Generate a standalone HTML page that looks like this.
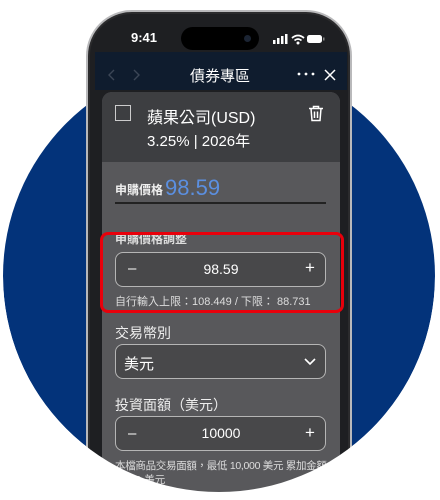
<!DOCTYPE html>
<html style="width:440px;height:500px;overflow:hidden"><head><meta charset="utf-8"><style>
*{margin:0;padding:0;box-sizing:border-box}
body{width:440px;height:500px;background:#fff;position:relative;overflow:hidden;font-family:"Liberation Sans","Noto Sans CJK TC",sans-serif;color:#eee}
.a{position:absolute}
.circle{left:3px;top:60px;width:432px;height:432px;border-radius:50%;background:#03337a}
.frame{left:86px;top:10px;width:266px;height:480px;border-radius:46px 46px 0 0;background:#2b2b2d;border:2px solid #b9b9bb;border-bottom:none}
.inner{left:90px;top:14px;width:258px;height:480px;border-radius:42px 42px 0 0;background:#1e1f22}
.nav{left:95px;top:52px;width:252px;height:38px;background:#0f1c2e}
.card{left:102px;top:92px;width:238px;height:400px;border-radius:10px 10px 0 0;background:#58585b;overflow:hidden}
.hdr{left:0;top:0;width:238px;height:70px;background:#3d3e41}
.box{border:1.5px solid #b5b5b5;border-radius:8px;background:#48484a;height:35px;width:211px;left:13px}
.t{white-space:nowrap}
</style></head><body>
<div class="a circle"></div>
<div class="a frame"></div>
<div class="a inner"></div>
<div class="a t" style="left:131px;top:30px;font-size:13px;font-weight:bold;color:#fff">9:41</div>
<div class="a" style="left:181px;top:27px;width:78px;height:23px;border-radius:12px;background:#000"></div>
<div class="a" style="left:244px;top:35px;width:7px;height:7px;border-radius:50%;background:#1b2433"></div>
<svg class="a" style="left:272px;top:32px" width="54" height="14" viewBox="0 0 54 14">
<rect x="1" y="8" width="2.5" height="4" fill="#fff"/><rect x="5" y="6" width="2.5" height="6" fill="#fff"/><rect x="9" y="4" width="2.5" height="8" fill="#fff"/><rect x="13" y="2" width="2.5" height="10" fill="#fff"/>
<path d="M20 6 Q26 1 32 6 M22.5 8.5 Q26 5.5 29.5 8.5" stroke="#fff" stroke-width="1.8" fill="none"/><circle cx="26" cy="11" r="1.5" fill="#fff"/>
<rect x="35" y="3" width="15" height="8" rx="2.5" fill="#fff"/><rect x="51" y="5.5" width="1.5" height="3" fill="#888"/>
</svg>
<div class="a nav"></div>
<svg class="a" style="left:106px;top:68px" width="36" height="14"><path d="M8 2L3 7L8 12M28 2L33 7L28 12" stroke="#3c4656" stroke-width="1.4" fill="none"/></svg>
<div class="a t" style="left:190px;top:65px;font-size:15px;color:#fff">債券專區</div>
<svg class="a" style="left:297px;top:72px" width="18" height="4"><circle cx="2" cy="2" r="1.4" fill="#fff"/><circle cx="9" cy="2" r="1.4" fill="#fff"/><circle cx="16" cy="2" r="1.4" fill="#fff"/></svg>
<svg class="a" style="left:323px;top:68px" width="14" height="14"><path d="M2 2L12 12M12 2L2 12" stroke="#fff" stroke-width="1.5"/></svg>
<div class="a card">
 <div class="a hdr"></div>
 <div class="a" style="left:13px;top:13px;width:16px;height:16px;border:1.5px solid #ccc"></div>
 <div class="a t" style="left:45px;top:12px;font-size:16px;color:#fff">蘋果公司(USD)</div>
 <div class="a t" style="left:45px;top:38px;font-size:15px;color:#fff">3.25% | 2026年</div>
 <svg class="a" style="left:206px;top:13px" width="16" height="17" viewBox="0 0 16 17"><path d="M1 3.5H15M5.5 3.5V1.5H10.5V3.5M3 3.5L4 15.5H12L13 3.5M6.5 6.5V13M9.5 6.5V13" stroke="#fff" stroke-width="1.5" fill="none"/></svg>
 <div class="a t" style="left:13px;top:89px;font-size:12px;font-weight:bold;color:#eee">申購價格</div>
 <div class="a t" style="left:63px;top:83px;font-size:22px;color:#5b8fe0">98.59</div>
 <div class="a" style="left:13px;top:110px;width:211px;height:1.5px;background:#222"></div>
 <div class="a t" style="left:13px;top:138px;font-size:12px;font-weight:bold;color:#ddd">申購價格調整</div>
 <div class="a box" style="top:160px"></div>
 <div class="a t" style="left:26px;top:168px;font-size:15px;color:#fff">–</div>
 <div class="a t" style="left:0;width:238px;text-align:center;top:169px;font-size:14px;color:#fff">98.59</div>
 <div class="a t" style="left:203px;top:166px;font-size:17px;color:#fff">+</div>
 <div class="a t" style="left:13px;top:201px;font-size:11px;color:#ddd">自行輸入上限：108.449 / 下限： 88.731</div>
 <div class="a t" style="left:13px;top:231px;font-size:14px;color:#eee">交易幣別</div>
 <div class="a box" style="top:252px"></div>
 <div class="a t" style="left:22px;top:261px;font-size:15px;color:#fff">美元</div>
 <svg class="a" style="left:201px;top:265px" width="14" height="9"><path d="M2 2L7 7L12 2" stroke="#fff" stroke-width="1.6" fill="none"/></svg>
 <div class="a t" style="left:13px;top:303px;font-size:14px;color:#eee">投資面額（美元）</div>
 <div class="a box" style="top:324px"></div>
 <div class="a t" style="left:26px;top:333px;font-size:15px;color:#fff">–</div>
 <div class="a t" style="left:0;width:238px;text-align:center;top:333px;font-size:14px;color:#fff">10000</div>
 <div class="a t" style="left:203px;top:331px;font-size:17px;color:#fff">+</div>
 <div class="a t" style="left:13px;top:366px;font-size:10.5px;letter-spacing:-0.3px;color:#ddd">本檔商品交易面額，最低 10,000 美元 累加金額</div>
 <div class="a t" style="left:13px;top:380px;font-size:10.5px;color:#ddd">1,000 美元</div>
</div>
<div class="a" style="left:100px;top:232px;width:244px;height:81px;border:3.5px solid #e8000b;border-radius:8px"></div>
<svg class="a" style="left:0;top:0" width="440" height="500"><path fill-rule="evenodd" fill="#fff" d="M0 276H440V500H0Z M3 276A216 216 0 0 0 435 276Z"/></svg>
</body></html>
